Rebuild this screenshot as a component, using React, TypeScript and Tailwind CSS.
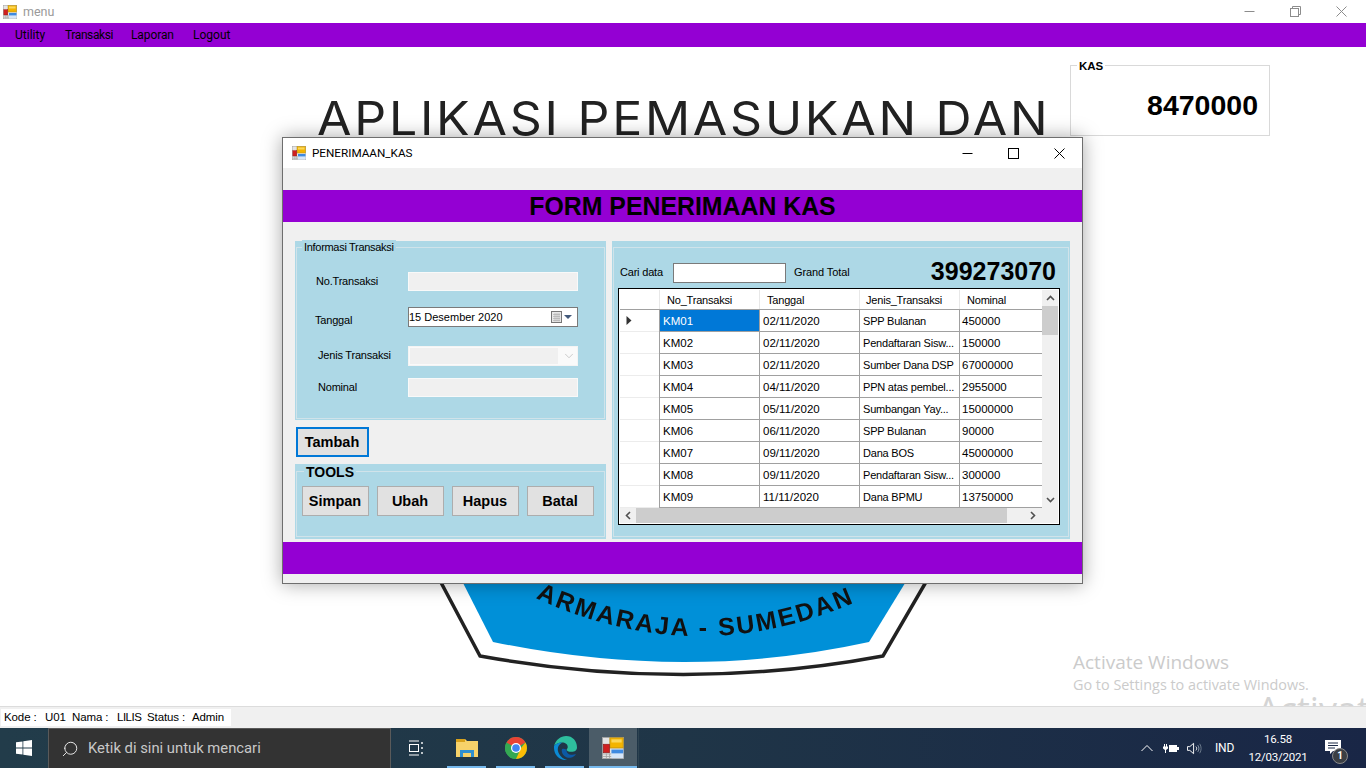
import React from 'react';
import { Search, ChevronDown } from 'lucide-react';

const PURPLE = 'bg-[#9400d3]';

const AppIcon = ({ size = 14 }: { size?: number }) => (
  <svg width={size} height={size} viewBox="0 0 14 14" className="shrink-0">
    <rect x="0.25" y="0.25" width="13.5" height="13.5" fill="#e4e4e4" stroke="#a0a0a0" strokeWidth="0.5" />
    <path d="M0.5 10.8H6M0.5 12.4H6M2.8 10.5V13.5M4.8 10.5V13.5" stroke="#a0a0a0" strokeWidth="0.5" />
    <rect x="5" y="0.5" width="8.5" height="6.5" fill="#f4b400" stroke="#b48c18" strokeWidth="0.5" />
    <rect x="6" y="1.5" width="6.5" height="2" fill="#fbd75a" />
    <rect x="0.8" y="4.6" width="4" height="5.4" fill="#d02020" stroke="#8c1a1a" strokeWidth="0.4" />
    <rect x="6" y="8" width="7.5" height="5.5" fill="#d6e6f8" />
    <rect x="6" y="8" width="7.5" height="2.4" fill="#3f8ae0" />
  </svg>
);

const WinMin = ({ color = '#000' }: { color?: string }) => (
  <svg width="11" height="11" viewBox="0 0 11 11"><path d="M0.5 5.5H10.5" stroke={color} fill="none" /></svg>
);
const WinClose = ({ color = '#000' }: { color?: string }) => (
  <svg width="11" height="11" viewBox="0 0 11 11"><path d="M0.5 0.5L10.5 10.5M10.5 0.5L0.5 10.5" stroke={color} fill="none" /></svg>
);

const rows = [
  ['KM01', '02/11/2020', 'SPP Bulanan', '450000'],
  ['KM02', '02/11/2020', 'Pendaftaran Sisw...', '150000'],
  ['KM03', '02/11/2020', 'Sumber Dana DSP', '67000000'],
  ['KM04', '04/11/2020', 'PPN atas pembel...', '2955000'],
  ['KM05', '05/11/2020', 'Sumbangan Yay...', '15000000'],
  ['KM06', '06/11/2020', 'SPP Bulanan', '90000'],
  ['KM07', '09/11/2020', 'Dana BOS', '45000000'],
  ['KM08', '09/11/2020', 'Pendaftaran Sisw...', '300000'],
  ['KM09', '11/11/2020', 'Dana BPMU', '13750000'],
];

const Logo = () => (
  <svg width="530" height="110" viewBox="0 0 530 110" className="absolute left-[420px] top-[528px] blur-[0.5px]">
    <path d="M17 0L60 81Q265 118 463 81L510 0" fill="#fff" stroke="#222" strokeWidth="3.5" />
    <path d="M39 0L73 67Q267 107 449 67L490 0Z" fill="#0090d8" />
    <defs>
      <path id="logo-arc" d="M60 -7Q280 129 500 -7" />
    </defs>
    <text fontFamily="'Liberation Sans', sans-serif" fontWeight="700" fontSize="25" letterSpacing="2.2" fill="#111">
      <textPath href="#logo-arc" startOffset="52%" textAnchor="end">ARMARAJA -</textPath>
    </text>
    <text fontFamily="'Liberation Sans', sans-serif" fontWeight="700" fontSize="25" letterSpacing="2.2" fill="#111">
      <textPath href="#logo-arc" startOffset="54%">SUMEDAN</textPath>
    </text>
  </svg>
);

const FieldRow = ({ label, labelClass, rowClass, children }: { label: string; labelClass: string; rowClass: string; children: React.ReactNode }) => (
  <div className={`flex items-center ${rowClass}`}>
    <span className={`w-[93px] shrink-0 tracking-[-0.2px] ${labelClass}`}>{label}</span>
    {children}
  </div>
);

const PlainInput = ({ h }: { h: string }) => <div className={`w-[170px] ${h} bg-[#f0f0f0] border border-[#f9f9f9]`} />;

const ToolButton = ({ label }: { label: string }) => (
  <button className="w-[67px] h-[30px] bg-[#e1e1e1] border border-[#adadad] font-bold text-[14.5px] text-black pt-px pr-px">{label}</button>
);

const Dialog = () => (
  <div className="absolute left-[282px] top-[90px] w-[801px] h-[447px] flex flex-col bg-[#f0f0f0] border border-[#6e6e6e] shadow-[0_0_18px_rgba(0,0,0,0.35)] font-['Liberation_Sans',sans-serif] text-[11px] text-black">
    <div className="h-[30px] bg-white flex items-center pl-[9px] shrink-0 relative">
      <AppIcon />
      <span className="ml-[6px] pt-px text-[11.7px] font-['Roboto',sans-serif]">PENERIMAAN_KAS</span>
      <div className="ml-auto flex items-center pr-[17px] gap-[35px]">
        <WinMin />
        <svg width="11" height="11" viewBox="0 0 11 11"><rect x="0.5" y="0.5" width="10" height="10" fill="none" stroke="#000" /></svg>
        <WinClose />
      </div>
    </div>
    <div className={`mt-[22px] h-[32px] ${PURPLE} flex items-center justify-center shrink-0 pt-[2px]`}>
      <span className="font-bold text-[24.85px] leading-none">FORM PENERIMAAN KAS</span>
    </div>

    <div className="flex pl-[12px] pt-[19px] h-[320px] shrink-0">
      <div className="w-[311px] flex flex-col">
        <div className="h-[179px] bg-[#add8e6] pt-[6px] px-px pb-px">
          <div className="relative h-full border border-[#d0e3ea]">
            <span className="absolute left-[5px] top-[-8px] bg-[#add8e6] px-[2px] leading-[14px] tracking-[-0.3px]">Informasi Transaksi</span>
            <div className="flex flex-col pl-[18px] pt-[24px]">
              <FieldRow label="No.Transaksi" labelClass="pl-[1px]" rowClass="h-[19px]"><PlainInput h="h-[19px]" /></FieldRow>
              <FieldRow label="Tanggal" labelClass="mt-[7px]" rowClass="h-[20px] mt-[16px]">
                <div className="w-[170px] h-[20px] bg-white border border-[#7a7a7a] flex items-center pr-[5px]">
                  <span>15 Desember 2020</span>
                  <svg width="21" height="12" viewBox="0 0 21 12" className="ml-auto">
                    <rect x="0.5" y="0.5" width="10" height="11" fill="#e8e8e8" stroke="#777" />
                    <path d="M2 3.5H9M2 5.5H9M2 7.5H9M2 9.5H9M4 2V10.5M6 2V10.5M8 2V10.5" stroke="#aaa" strokeWidth="0.6" />
                    <path d="M13 4H21L17 8Z" fill="#43597a" />
                  </svg>
                </div>
              </FieldRow>
              <FieldRow label="Jenis Transaksi" labelClass="pl-[3px] mb-[2px]" rowClass="h-[20px] mt-[19px]">
                <div className="w-[170px] h-[20px] bg-[#fafafa] border border-[#f4f4f4] flex items-center pl-[1px]">
                  <div className="w-[148px] h-[16px] bg-[#f0f0f0]" />
                  <ChevronDown className="ml-[4px] text-[#b8b8b8]" size={14} strokeWidth={1.2} />
                </div>
              </FieldRow>
              <FieldRow label="Nominal" labelClass="pl-[3px]" rowClass="h-[19px] mt-[12px]"><PlainInput h="h-[19px]" /></FieldRow>
            </div>
          </div>
        </div>

        <button className="mt-[7px] ml-px w-[73px] h-[30px] bg-[#e1e1e1] border-2 border-[#0078d7] font-bold text-[14.5px] pt-[2px] pr-px">Tambah</button>

        <div className="mt-[7px] h-[75px] bg-[#add8e6] pt-[7px] px-px pb-[2px]">
          <div className="relative h-full border border-[#d0e3ea] pl-[5px] pt-[14px] flex gap-[8px]">
            <span className="absolute left-[7px] top-[-7px] bg-[#add8e6] px-[2px] font-bold text-[14px] leading-[15px]">TOOLS</span>
            <ToolButton label="Simpan" />
            <ToolButton label="Ubah" />
            <ToolButton label="Hapus" />
            <ToolButton label="Batal" />
          </div>
        </div>
      </div>

      <div className="ml-[6px] w-[458px] h-[298px] bg-[#add8e6] pt-[6px] px-px pb-[2px]">
        <div className="h-full border border-[#d0e3ea] pl-[4px] flex flex-col">
          <div className="h-[40px] flex items-center shrink-0 pt-[8px] pr-[12px]">
            <span className="w-[55px] pl-[2px] tracking-[-0.2px]">Cari data</span>
            <div className="w-[113px] h-[20px] bg-white border border-[#7a7a7a] mt-[1px]" />
            <span className="ml-[8px] tracking-[-0.1px]">Grand Total</span>
            <span className="ml-auto mb-[2px] font-bold text-[25px] leading-none">399273070</span>
          </div>
          <div className="w-[442px] h-[237px] border border-black p-px bg-white flex flex-col shrink-0">
            <div className="flex h-[218px]">
              <div className="w-[422px] flex flex-col overflow-hidden">
                <div className="flex h-[20px] shrink-0 border-b border-[#a0a0a0] tracking-[-0.2px]">
                  <div className="w-[40px] border-r border-[#e8e8e8]" />
                  <div className="w-[100px] pl-[7px] border-r border-[#e8e8e8] leading-[21px]">No_Transaksi</div>
                  <div className="w-[100px] pl-[7px] border-r border-[#e8e8e8] leading-[21px]">Tanggal</div>
                  <div className="w-[100px] pl-[6px] border-r border-[#e8e8e8] leading-[21px]">Jenis_Transaksi</div>
                  <div className="w-[82px] pl-[7px] leading-[21px]">Nominal</div>
                </div>
                {rows.map((r, i) => (
                  <div key={r[0]} className="flex h-[22px] shrink-0 border-b border-[#a0a0a0] text-[11.5px]">
                    <div className="w-[40px] border-r border-[#a0a0a0] flex items-center pl-[6px] relative">
                      {i === 0 && <svg width="6" height="9" viewBox="0 0 6 9"><path d="M0.5 0L5.5 4.5L0.5 9Z" fill="#333" /></svg>}
                      <span className="absolute left-0 right-0 bottom-[-1px] h-px bg-[#ececec]" />
                    </div>
                    <div className={`w-[100px] pl-[3px] border-r border-[#a0a0a0] leading-[23px] ${i === 0 ? 'bg-[#0078d7] text-white' : ''}`}>{r[0]}</div>
                    <div className="w-[100px] pl-[3px] border-r border-[#a0a0a0] leading-[23px]">{r[1]}</div>
                    <div className="w-[100px] pl-[3px] border-r border-[#a0a0a0] leading-[23px] whitespace-nowrap overflow-hidden text-[11px] tracking-[-0.2px]">{r[2]}</div>
                    <div className="w-[82px] pl-[2px] leading-[23px]">{r[3]}</div>
                  </div>
                ))}
              </div>
              <div className="w-[16px] bg-[#f0f0f0] flex flex-col items-center shrink-0">
                <div className="h-[16px] flex items-center">
                  <svg width="9" height="6" viewBox="0 0 9 6"><path d="M1 5L4.5 1.5L8 5" fill="none" stroke="#505050" strokeWidth="1.6" /></svg>
                </div>
                <div className="w-full h-[29px] bg-[#cdcdcd]" />
                <div className="mt-auto h-[16px] flex items-center">
                  <svg width="9" height="6" viewBox="0 0 9 6"><path d="M1 1L4.5 4.5L8 1" fill="none" stroke="#505050" strokeWidth="1.6" /></svg>
                </div>
              </div>
            </div>
            <div className="h-[15px] bg-[#f0f0f0] flex items-center shrink-0">
              <div className="w-[16px] flex justify-center">
                <svg width="6" height="9" viewBox="0 0 6 9"><path d="M5 1L1.5 4.5L5 8" fill="none" stroke="#505050" strokeWidth="1.6" /></svg>
              </div>
              <div className="w-[371px] h-full bg-[#cdcdcd]" />
              <div className="ml-[18px] w-[16px] flex justify-center">
                <svg width="6" height="9" viewBox="0 0 6 9"><path d="M1 1L4.5 4.5L1 8" fill="none" stroke="#505050" strokeWidth="1.6" /></svg>
              </div>
            </div>
          </div>
        </div>
      </div>
    </div>

    <div className={`h-[32px] ${PURPLE} shrink-0`} />
  </div>
);

const Taskbar = () => (
  <div className="h-[40px] shrink-0 flex bg-gradient-to-r from-[#223c4a] via-[#1f3547] to-[#192646] text-white font-['Roboto',sans-serif]">
    <div className="w-[48px] flex items-center justify-center">
      <svg width="16" height="16" viewBox="0 0 16 16" fill="#fff">
        <path d="M0 2.3L6.5 1.4V7.6H0ZM7.3 1.3L16 0V7.6H7.3ZM0 8.4H6.5V14.6L0 13.7ZM7.3 8.4H16V16L7.3 14.7Z" />
      </svg>
    </div>
    <div className="w-[343px] bg-[#333333] border border-[#5a5a5a] border-b-0 flex items-center pl-[12px]">
      <Search className="-scale-x-100 text-[#e8e8e8]" size={18} strokeWidth={1.3} />
      <span className="ml-[9px] text-[14.8px] text-[#c8c8c8]">Ketik di sini untuk mencari</span>
    </div>
    <div className="w-[50px] flex items-center justify-center">
      <svg width="16" height="16" viewBox="0 0 16 16" fill="none" stroke="#fff" strokeWidth="1">
        <path d="M1 1H11M1 15H11" />
        <rect x="1.5" y="4.5" width="9" height="7" />
        <path d="M14 2V4M14 7V9M14 12V14" strokeWidth="1.4" />
      </svg>
    </div>
    <div className="ml-[6px] w-[39px] flex flex-col items-center border-b-[2px] border-[#76b9ed] pt-[10px]">
      <svg width="22" height="20" viewBox="0 0 22 20">
        <path d="M0 1H9L11 3H22V19H0Z" fill="#f7d26a" />
        <path d="M0 1H9V4H0Z" fill="#d9a21b" />
        <path d="M4 19V12H18V19H15V15H7V19Z" fill="#2f8fd0" />
      </svg>
    </div>
    <div className="ml-[10px] w-[39px] flex flex-col items-center border-b-[2px] border-[#76b9ed] pt-[9px]">
      <svg width="22" height="22" viewBox="0 0 22 22">
        <circle cx="11" cy="11" r="11" fill="#34a853" />
        <path d="M11 0A11 11 0 0 1 20.5 5.5L11 11L1.5 5.5A11 11 0 0 1 11 0Z" fill="#ea4335" />
        <path d="M20.5 5.5A11 11 0 0 1 11 22L16 11Z" fill="#fbbc05" />
        <path d="M1.5 5.5L7 13.5L10 22A11 11 0 0 1 1.5 5.5Z" fill="#34a853" />
        <circle cx="11" cy="11" r="5" fill="#fff" />
        <circle cx="11" cy="11" r="3.8" fill="#4285f4" />
      </svg>
    </div>
    <div className="ml-[10px] w-[39px] flex flex-col items-center border-b-[2px] border-[#76b9ed] pt-[8px]">
      <svg width="24" height="24" viewBox="0 0 22 22">
        <path d="M1 9C2.5 3.5 7 0 12 0C18 0 22 4.5 22 10.5C22 13 20 14.5 17 14.5C14 14.5 12.5 13.5 12.5 12.5C12.5 12 13.5 11.5 13.5 10C13.5 7.5 11 6 8.5 6C5 6 2.5 7.5 1 9Z" fill="#2ebf9e" />
        <path d="M1 9C2.5 7.5 5 6 8.5 6C5 8 4 10.5 4.5 13.5C5.5 18 9 21 13 22C6.5 22.5 0 17.5 1 9Z" fill="#0b8ad4" />
        <path d="M8 13C8 17 11.5 20.5 16 20C18.5 19.5 20.5 18 21 16.5C17 18 12 17 12.5 12.5C10.5 11.5 8 11 8 13Z" fill="#0c59a4" />
      </svg>
    </div>
    <div className="ml-[5px] w-[48px] flex flex-col items-center bg-[#4b5c68] border-b-[2px] border-[#76b9ed] pt-[9px]">
      <AppIcon size={22} />
    </div>
    <div className="w-px bg-[#2e4452] ml-px" />

    <div className="ml-auto flex items-center">
      <svg width="12" height="8" viewBox="0 0 12 8" fill="none" stroke="#fff" strokeWidth="1"><path d="M0.5 7L6 1.5L11.5 7" /></svg>
      <svg width="16" height="11" viewBox="0 0 16 11" className="ml-[10px]" fill="#fff">
        <path d="M1 1V3.5H0V5.5L2 7V10H3V7L5 5.5V3.5H4V1H3V3.5H2V1ZM6 2H14V4H16V7H14V9H6V8H13V3H6Z" />
        <rect x="6" y="3" width="7" height="5" />
      </svg>
      <svg width="16" height="13" viewBox="0 0 17 13" fill="none" stroke="#fff" strokeWidth="1" className="ml-[8px]">
        <path d="M0.5 4.5H3L7 1V12L3 8.5H0.5Z" />
        <path d="M9.5 4.5C10.5 5.5 10.5 7.5 9.5 8.5" />
        <path d="M11.5 3C13 5 13 8 11.5 10" stroke="#9aa7b5" />
        <path d="M13.5 1.5C15.5 4.5 15.5 8.5 13.5 11.5" stroke="#6e7d8e" />
      </svg>
      <span className="ml-[12px] w-[20px] text-[12px] tracking-[-0.2px]">IND</span>
      <div className="ml-[5px] w-[76px] flex flex-col items-center text-[11.5px] tracking-[-0.2px] leading-[18px]">
        <span>16.58</span>
        <span>12/03/2021</span>
      </div>
      <div className="ml-[9px] mr-[25px] relative w-[16px] h-[16px]">
        <svg width="16" height="15" viewBox="0 0 16 15" fill="#fff">
          <path d="M0 0H16V11H8L5 14V11H0Z" />
          <path d="M3 3H13M3 5.5H13M3 8H10" stroke="#1c2a46" strokeWidth="1" />
        </svg>
        <span className="absolute left-[7px] top-[8px] w-[16px] h-[16px] rounded-full bg-[#3b3f44] border border-[#8a8a8a] flex items-center justify-center text-[10px] font-bold leading-none">1</span>
      </div>
    </div>
  </div>
);

const App = () => {
  return (
    <div className="w-[1366px] h-[768px] flex flex-col overflow-hidden bg-white font-['Liberation_Sans',sans-serif]">
      <div className="h-[23px] shrink-0 flex items-center pl-[3px] font-['Roboto',sans-serif]">
        <AppIcon />
        <span className="ml-[6px] pt-px text-[12.5px] text-[#9a9a9a]">menu</span>
        <div className="ml-auto flex items-center pr-[19px] gap-[35px]">
          <WinMin color="#8c8c8c" />
          <svg width="11" height="11" viewBox="0 0 11 11" fill="none" stroke="#8c8c8c">
            <path d="M2.5 2.5V0.5H10.5V8.5H8.5" />
            <rect x="0.5" y="2.5" width="8" height="8" />
          </svg>
          <WinClose color="#8c8c8c" />
        </div>
      </div>
      <div className={`h-[24px] shrink-0 ${PURPLE} flex items-center pl-[15px] text-[12px] text-black font-['Roboto',sans-serif]`}>
        <span className="w-[50px]">Utility</span>
        <span className="w-[66px] tracking-[-0.4px]">Transaksi</span>
        <span className="w-[62px] tracking-[-0.1px]">Laporan</span>
        <span>Logout</span>
      </div>

      <div className="relative h-[659px] shrink-0 overflow-hidden flex justify-end items-start pr-[96px] pt-[18px]">
        <div className="absolute left-[317px] top-[41px] text-[47px] leading-[60px] whitespace-nowrap tracking-[2.6px] scale-x-[1.063] origin-left text-[#222] font-['Inter',sans-serif] font-normal">APLIKASI PEMASUKAN DAN</div>
        <Logo />
        <div className="absolute left-[1073px] top-[603px] text-[19px] leading-[24px] text-[#cbcbcb] font-['Open_Sans',sans-serif]">Activate Windows</div>
        <div className="absolute left-[1073px] top-[629px] text-[14.4px] leading-[18px] text-[#cbcbcb] font-['Open_Sans',sans-serif] whitespace-nowrap">Go to Settings to activate Windows.</div>
        <div className="absolute left-[1257px] top-[643px] text-[36px] leading-[40px] text-[#d4d4d4] font-['Open_Sans',sans-serif] whitespace-nowrap">Activate</div>

        <div className="relative w-[200px] h-[71px] border border-[#d9d9d9] flex items-center justify-end pr-[11px]">
          <span className="absolute left-[6px] top-[-7px] bg-white px-[2px] font-bold text-[11.5px] leading-[15px]">KAS</span>
          <span className="font-bold text-[28.5px] leading-none pt-[10px]">8470000</span>
        </div>

        <Dialog />
      </div>

      <div className="h-[22px] shrink-0 bg-[#f0f0f0] border-t border-[#dcdcdc] pt-[2px] pl-px">
        <div className="w-[230px] h-[17px] bg-white flex items-center pl-[3px] text-[11.5px] tracking-[-0.1px] text-black whitespace-nowrap">
          <span className="w-[41px]">Kode :</span>
          <span className="w-[27px]">U01</span>
          <span className="w-[45px]">Nama :</span>
          <span className="w-[30px] tracking-[-0.5px]">LILIS</span>
          <span className="w-[45px]">Status :</span>
          <span>Admin</span>
        </div>
      </div>

      <Taskbar />
    </div>
  );
};

export default App;
